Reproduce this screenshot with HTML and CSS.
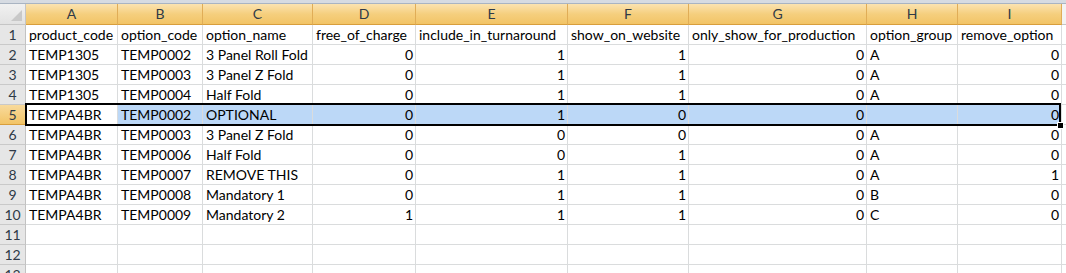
FILE: index.html
```html
<!DOCTYPE html>
<html lang="en">
<head>
    <meta charset="UTF-8">
    <title>Options - Sheet1</title>
    <link rel="stylesheet" href="styles.css">
</head>
<body>
    <div class="sheet">
        <div class="top-strip"></div>
        <div class="grid-wrap">
            <table class="grid">
                <colgroup>
                    <col class="w-head">
                    <col class="w-a">
                    <col class="w-b">
                    <col class="w-c">
                    <col class="w-d">
                    <col class="w-e">
                    <col class="w-f">
                    <col class="w-g">
                    <col class="w-h">
                    <col class="w-i">
                    <col class="w-j">
                </colgroup>
                <thead>
                    <tr class="col-heads">
                        <th class="corner"><span class="corner-mark"></span></th>
                        <th class="col-head">A</th>
                        <th class="col-head">B</th>
                        <th class="col-head">C</th>
                        <th class="col-head">D</th>
                        <th class="col-head">E</th>
                        <th class="col-head">F</th>
                        <th class="col-head">G</th>
                        <th class="col-head">H</th>
                        <th class="col-head">I</th>
                        <th class="col-head off"></th>
                    </tr>
                </thead>
                <tbody>
                    <tr>
                        <th class="row-head">1</th>
                        <td>product_code</td><td>option_code</td><td>option_name</td><td>free_of_charge</td>
                        <td>include_in_turnaround</td><td>show_on_website</td><td>only_show_for_production</td>
                        <td>option_group</td><td>remove_option</td><td></td>
                    </tr>
                    <tr>
                        <th class="row-head">2</th>
                        <td>TEMP1305</td><td>TEMP0002</td><td>3 Panel Roll Fold</td><td class="num">0</td>
                        <td class="num">1</td><td class="num">1</td><td class="num">0</td>
                        <td>A</td><td class="num">0</td><td></td>
                    </tr>
                    <tr>
                        <th class="row-head">3</th>
                        <td>TEMP1305</td><td>TEMP0003</td><td>3 Panel Z Fold</td><td class="num">0</td>
                        <td class="num">1</td><td class="num">1</td><td class="num">0</td>
                        <td>A</td><td class="num">0</td><td></td>
                    </tr>
                    <tr>
                        <th class="row-head">4</th>
                        <td>TEMP1305</td><td>TEMP0004</td><td>Half Fold</td><td class="num">0</td>
                        <td class="num">1</td><td class="num">1</td><td class="num">0</td>
                        <td>A</td><td class="num">0</td><td></td>
                    </tr>
                    <tr class="picked">
                        <th class="row-head">5</th>
                        <td class="active">TEMPA4BR</td><td>TEMP0002</td><td>OPTIONAL</td><td class="num">0</td>
                        <td class="num">1</td><td class="num">0</td><td class="num">0</td>
                        <td></td><td class="num">0</td><td class="outside"></td>
                    </tr>
                    <tr>
                        <th class="row-head">6</th>
                        <td>TEMPA4BR</td><td>TEMP0003</td><td>3 Panel Z Fold</td><td class="num">0</td>
                        <td class="num">0</td><td class="num">0</td><td class="num">0</td>
                        <td>A</td><td class="num">0</td><td></td>
                    </tr>
                    <tr>
                        <th class="row-head">7</th>
                        <td>TEMPA4BR</td><td>TEMP0006</td><td>Half Fold</td><td class="num">0</td>
                        <td class="num">0</td><td class="num">1</td><td class="num">0</td>
                        <td>A</td><td class="num">0</td><td></td>
                    </tr>
                    <tr>
                        <th class="row-head">8</th>
                        <td>TEMPA4BR</td><td>TEMP0007</td><td>REMOVE THIS</td><td class="num">0</td>
                        <td class="num">1</td><td class="num">1</td><td class="num">0</td>
                        <td>A</td><td class="num">1</td><td></td>
                    </tr>
                    <tr>
                        <th class="row-head">9</th>
                        <td>TEMPA4BR</td><td>TEMP0008</td><td>Mandatory 1</td><td class="num">0</td>
                        <td class="num">1</td><td class="num">1</td><td class="num">0</td>
                        <td>B</td><td class="num">0</td><td></td>
                    </tr>
                    <tr>
                        <th class="row-head">10</th>
                        <td>TEMPA4BR</td><td>TEMP0009</td><td>Mandatory 2</td><td class="num">1</td>
                        <td class="num">1</td><td class="num">1</td><td class="num">0</td>
                        <td>C</td><td class="num">0</td><td></td>
                    </tr>
                    <tr>
                        <th class="row-head">11</th>
                        <td></td><td></td><td></td><td></td><td></td><td></td><td></td><td></td><td></td><td></td>
                    </tr>
                    <tr>
                        <th class="row-head">12</th>
                        <td></td><td></td><td></td><td></td><td></td><td></td><td></td><td></td><td></td><td></td>
                    </tr>
                    <tr>
                        <th class="row-head">13</th>
                        <td></td><td></td><td></td><td></td><td></td><td></td><td></td><td></td><td></td><td></td>
                    </tr>
                </tbody>
            </table>
            <!-- selection box for row 5 sits over the grid -->
            <div class="selection"><span class="fill-handle"></span></div>
        </div>
    </div>
</body>
</html>
```

FILE: styles.css
```css
/* Excel 2010 style sheet grid */
body {
    margin: 0;
    padding: 0;
    background-color: #fff;
    overflow: hidden;
}

.sheet {
    width: 1066px;
    height: 273px;
    overflow: hidden;
    font-family: 'Lato', 'Liberation Sans', sans-serif;
    font-size: 14px;
    color: #000;
}

.top-strip {
    height: 3px;
    background-color: #d6dbe2;
    border-bottom: 1px solid #a9b4c2;
}

.grid-wrap {
    position: relative;
}

.grid {
    table-layout: fixed;
    border-collapse: separate;
    border-spacing: 0;
    width: 1076px;
}

.w-head { width: 26px; }
.w-a { width: 92px; }
.w-b { width: 85px; }
.w-c { width: 110px; }
.w-d { width: 103px; }
.w-e { width: 152px; }
.w-f { width: 121px; }
.w-g { width: 178px; }
.w-h { width: 91px; }
.w-i { width: 104px; }
.w-j { width: 14px; }

.grid td,
.grid th {
    box-sizing: border-box;
    height: 20px;
    padding: 0 3px;
    border-right: 1px solid #dadcdd;
    border-bottom: 1px solid #dadcdd;
    white-space: nowrap;
    overflow: hidden;
    font-weight: normal;
    vertical-align: middle;
    line-height: 18px;
}

.grid td.num {
    text-align: right;
    padding-right: 2px;
}

.col-heads th {
    height: 21px;
}

.grid .col-head {
    text-align: center;
    color: #2f3a47;
    background: linear-gradient(#fbe3b1, #f5cf7e 50%, #f2c466);
    border-right: 1px solid #e0ad57;
    border-bottom: 1px solid #d89e3c;
}

.grid .col-head.off {
    background: #f3f3f3;
    border-bottom-color: #c5c5c5;
}

.grid .corner {
    position: relative;
    background: linear-gradient(#f1f1f1, #e2e2e2);
    border-right: 1px solid #c5c5c5;
    border-bottom: 1px solid #c5c5c5;
}

.corner-mark {
    position: absolute;
    right: 3px;
    bottom: 3px;
    width: 0;
    height: 0;
    border-left: 11px solid transparent;
    border-bottom: 11px solid #c8c8c8;
}

.grid .row-head {
    text-align: center;
    padding: 0;
    color: #2f3a47;
    background-color: #e6e6e6;
    border-right: 1px solid #c2c2c2;
    border-bottom: 1px solid #c9c9c9;
}

.picked td {
    background-color: #bcd8f7;
}

.grid .picked .row-head {
    background: linear-gradient(#f8da9c, #f2c466);
    border-bottom-color: #d89e3c;
}

.picked td.active,
.picked td.outside {
    background-color: #fff;
}

.selection {
    position: absolute;
    left: 25px;
    top: 99px;
    width: 1032px;
    height: 19px;
    border: 2px solid #000;
    pointer-events: none;
}

.fill-handle {
    position: absolute;
    right: -5px;
    bottom: -5px;
    width: 5px;
    height: 5px;
    background-color: #000;
    border: 1px solid #fff;
}
```
